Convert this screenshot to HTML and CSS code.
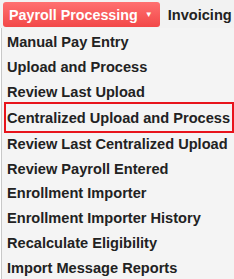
FILE: index.html
```html
<!DOCTYPE html>
<html>
<head>
<meta charset="utf-8">
<link rel="stylesheet" href="styles.css">
</head>
<body>
<div class="nav">
  <div class="tab active">Payroll Processing<span class="caret">&#9660;</span></div>
  <div class="sep"></div>
  <div class="tab">Invoicing</div>
</div>
<ul class="menu">
  <li>Manual Pay Entry</li>
  <li>Upload and Process</li>
  <li>Review Last Upload</li>
  <li class="hl">Centralized Upload and Process</li>
  <li>Review Last Centralized Upload</li>
  <li>Review Payroll Entered</li>
  <li>Enrollment Importer</li>
  <li>Enrollment Importer History</li>
  <li>Recalculate Eligibility</li>
  <li>Import Message Reports</li>
</ul>
</body>
</html>
```
FILE: styles.css
```css
html, body {
  margin: 0;
  padding: 0;
  background: #ffffff;
  width: 234px;
  height: 279px;
  overflow: hidden;
  font-family: "Liberation Sans", Arial, sans-serif;
  font-weight: bold;
  font-size: 14.6px;
}
.nav {
  display: flex;
  align-items: stretch;
  height: 28px;
  background: #f2f2f2;
  padding: 2px 0 0 3px;
  box-sizing: border-box;
}
.tab {
  display: flex;
  align-items: center;
  padding: 0 7px;
  color: #222;
  white-space: nowrap;
}
.tab.active {
  background: linear-gradient(#ff7070, #f24848);
  color: #fff;
  border-radius: 3px;
  height: 25px;
  box-sizing: border-box;
  padding: 0 7px 0 6px;
  font-size: 14.3px;
}
.caret {
  font-size: 8px;
  margin-left: 7px;
}
.sep {
  width: 1px;
  background: #d8d8d8;
  margin: 2px 3px 2px 2px;
}
.tab:last-child {
  padding-left: 3px;
}
.menu {
  list-style: none;
  margin: 0 0 0 1px;
  padding: 2px 0 0 0;
  background: #f4f4f4;
  border-left: 1px solid #c8c8c8;
  color: #222;
}
.menu li {
  height: 24.9px;
  line-height: 24.9px;
  padding-left: 5px;
  white-space: nowrap;
}
.menu li.hl {
  margin: -2px 1px 0 3px;
  outline: 2px solid #e8141c;
  outline-offset: -1px;
  height: 27px;
  line-height: 27px;
  padding-left: 2px;
  border-top: 2px solid transparent;
}
```
